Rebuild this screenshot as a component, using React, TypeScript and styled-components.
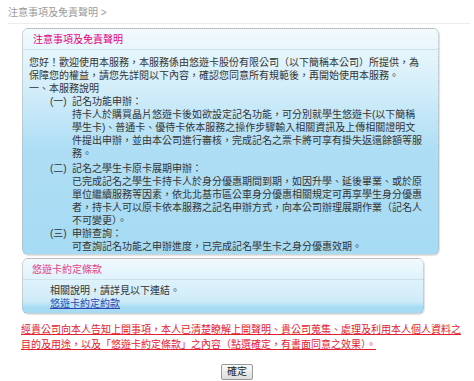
import React from 'react';
import styled, { createGlobalStyle } from 'styled-components';

const GlobalStyle = createGlobalStyle`
  body {
    margin: 0;
    background: #ffffff;
    font-family: "Liberation Sans", "Noto Sans CJK TC", sans-serif;
    font-size: 10px;
    color: #333333;
  }
`;

const Page = styled.div`
  width: 474px;
  height: 381px;
  padding: 0 4px 0 8px;
  box-sizing: border-box;
  overflow: hidden;
`;

const Breadcrumb = styled.div`
  height: 24px;
  line-height: 13px;
  padding-top: 6px;
  box-sizing: border-box;
  color: #9a9a9a;
  font-size: 10px;
  border-bottom: 1px solid #ececec;
`;

const Content = styled.div`
  padding-left: 14px;
`;

const Panel = styled.div<{ $width: number; $top: number; $fill: string }>`
  width: ${(p) => p.$width}px;
  margin-top: ${(p) => p.$top}px;
  box-sizing: border-box;
  border: 1px dotted #b0b0b0;
  border-radius: 6px;
  box-shadow: 1px 1px 1px rgba(0, 0, 0, 0.12);
  background: ${(p) => p.$fill};
  overflow: hidden;
`;

const PanelTitle = styled.div<{ $color: string; $indent: number }>`
  color: ${(p) => p.$color};
  font-size: 10px;
  line-height: 13px;
  padding: 4px 0 3px ${(p) => p.$indent}px;
  border-bottom: 1px solid rgba(200, 220, 230, 0.8);
`;

const PanelBody = styled.div`
  padding: 6px 16px 1px 6px;
  line-height: 13px;
`;

const Text = styled.div``;

const Item = styled.div<{ $gap?: number }>`
  display: grid;
  grid-template-columns: 22px 1fr;
  margin-left: 21px;
  margin-top: ${(p) => p.$gap ?? 0}px;
`;

const Label = styled.span`
  white-space: nowrap;
`;

const InfoBody = styled.div`
  padding: 4px 10px 3px 27px;
  line-height: 13px;
`;

const Link = styled.a`
  color: #2a46b0;
  text-decoration: underline;
`;

const Notice = styled.p`
  width: 445px;
  margin: 8px 0 0 -1px;
  color: #e3202d;
  text-decoration: underline;
  line-height: 15px;
`;

const Actions = styled.div`
  display: flex;
  justify-content: center;
  margin-top: 12px;
  padding-right: 4px;
`;

const Button = styled.button`
  font-family: "Liberation Sans", "Noto Sans CJK TC", sans-serif;
  font-size: 10px;
  line-height: 12px;
  padding: 1px 5px;
  color: #222;
  background: linear-gradient(#fafafa, #dcdcdc);
  border: 1px solid #9a9a9a;
  border-radius: 2px;
`;

export default function App() {
  return (
    <>
      <GlobalStyle />
      <Page>
        <Breadcrumb>注意事項及免責聲明 &gt;</Breadcrumb>
        <Content>
          <Panel
            $width={417}
            $top={4}
            $fill="linear-gradient(180deg, #f2fafd 0px, #d2edf9 62px, #aedef5 120px, #a6dbf4 100%)"
          >
            <PanelTitle $color="#e4007f" $indent={10}>注意事項及免責聲明</PanelTitle>
            <PanelBody>
              <Text>
                您好！歡迎使用本服務，本服務係由悠遊卡股份有限公司（以下簡稱本公司）所提供，為保障您的權益，請您先詳閱以下內容，確認您同意所有規範後，再開始使用本服務。
              </Text>
              <Text>一、本服務說明</Text>
              <Item>
                <Label>(一)</Label>
                <div>
                  <div>記名功能申辦：</div>
                  <div>
                    持卡人於購買晶片悠遊卡後如欲設定記名功能，可分別就學生悠遊卡(以下簡稱學生卡)、普通卡、優待卡依本服務之操作步驟輸入相關資訊及上傳相關證明文件提出申辦，並由本公司進行審核，完成記名之票卡將可享有掛失返還餘額等服務。
                  </div>
                </div>
              </Item>
              <Item $gap={2}>
                <Label>(二)</Label>
                <div>
                  <div>記名之學生卡原卡展期申辦：</div>
                  <div>
                    已完成記名之學生卡持卡人於身分優惠期間到期，如因升學、延後畢業、或於原單位繼續服務等因素，依北北基市區公車身分優惠相關規定可再享學生身分優惠者，持卡人可以原卡依本服務之記名申辦方式，向本公司辦理展期作業（記名人不可變更）。
                  </div>
                </div>
              </Item>
              <Item>
                <Label>(三)</Label>
                <div>
                  <div>申辦查詢：</div>
                  <div>可查詢記名功能之申辦進度，已完成記名學生卡之身分優惠效期。</div>
                </div>
              </Item>
            </PanelBody>
          </Panel>

          <Panel
            $width={402}
            $top={3}
            $fill="linear-gradient(180deg, #f1f9fd 0px, #def2fb 22px, #cfebf8 42px, #c4e8f7 44px, #a8dcf4 48px, #a3daf3 100%)"
          >
            <PanelTitle $color="#e0408c" $indent={9}>悠遊卡約定條款</PanelTitle>
            <InfoBody>
              <div>相關說明，請詳見以下連結。</div>
              <Link href="#">悠遊卡約定約款</Link>
            </InfoBody>
          </Panel>

          <Notice>
            經貴公司向本人告知上開事項，本人已清楚瞭解上開聲明、貴公司蒐集、處理及利用本人個人資料之目的及用途，以及「悠遊卡約定條款」之內容（點選確定，有書面同意之效果）。
          </Notice>
        </Content>
        <Actions>
          <Button>確定</Button>
        </Actions>
      </Page>
    </>
  );
}
